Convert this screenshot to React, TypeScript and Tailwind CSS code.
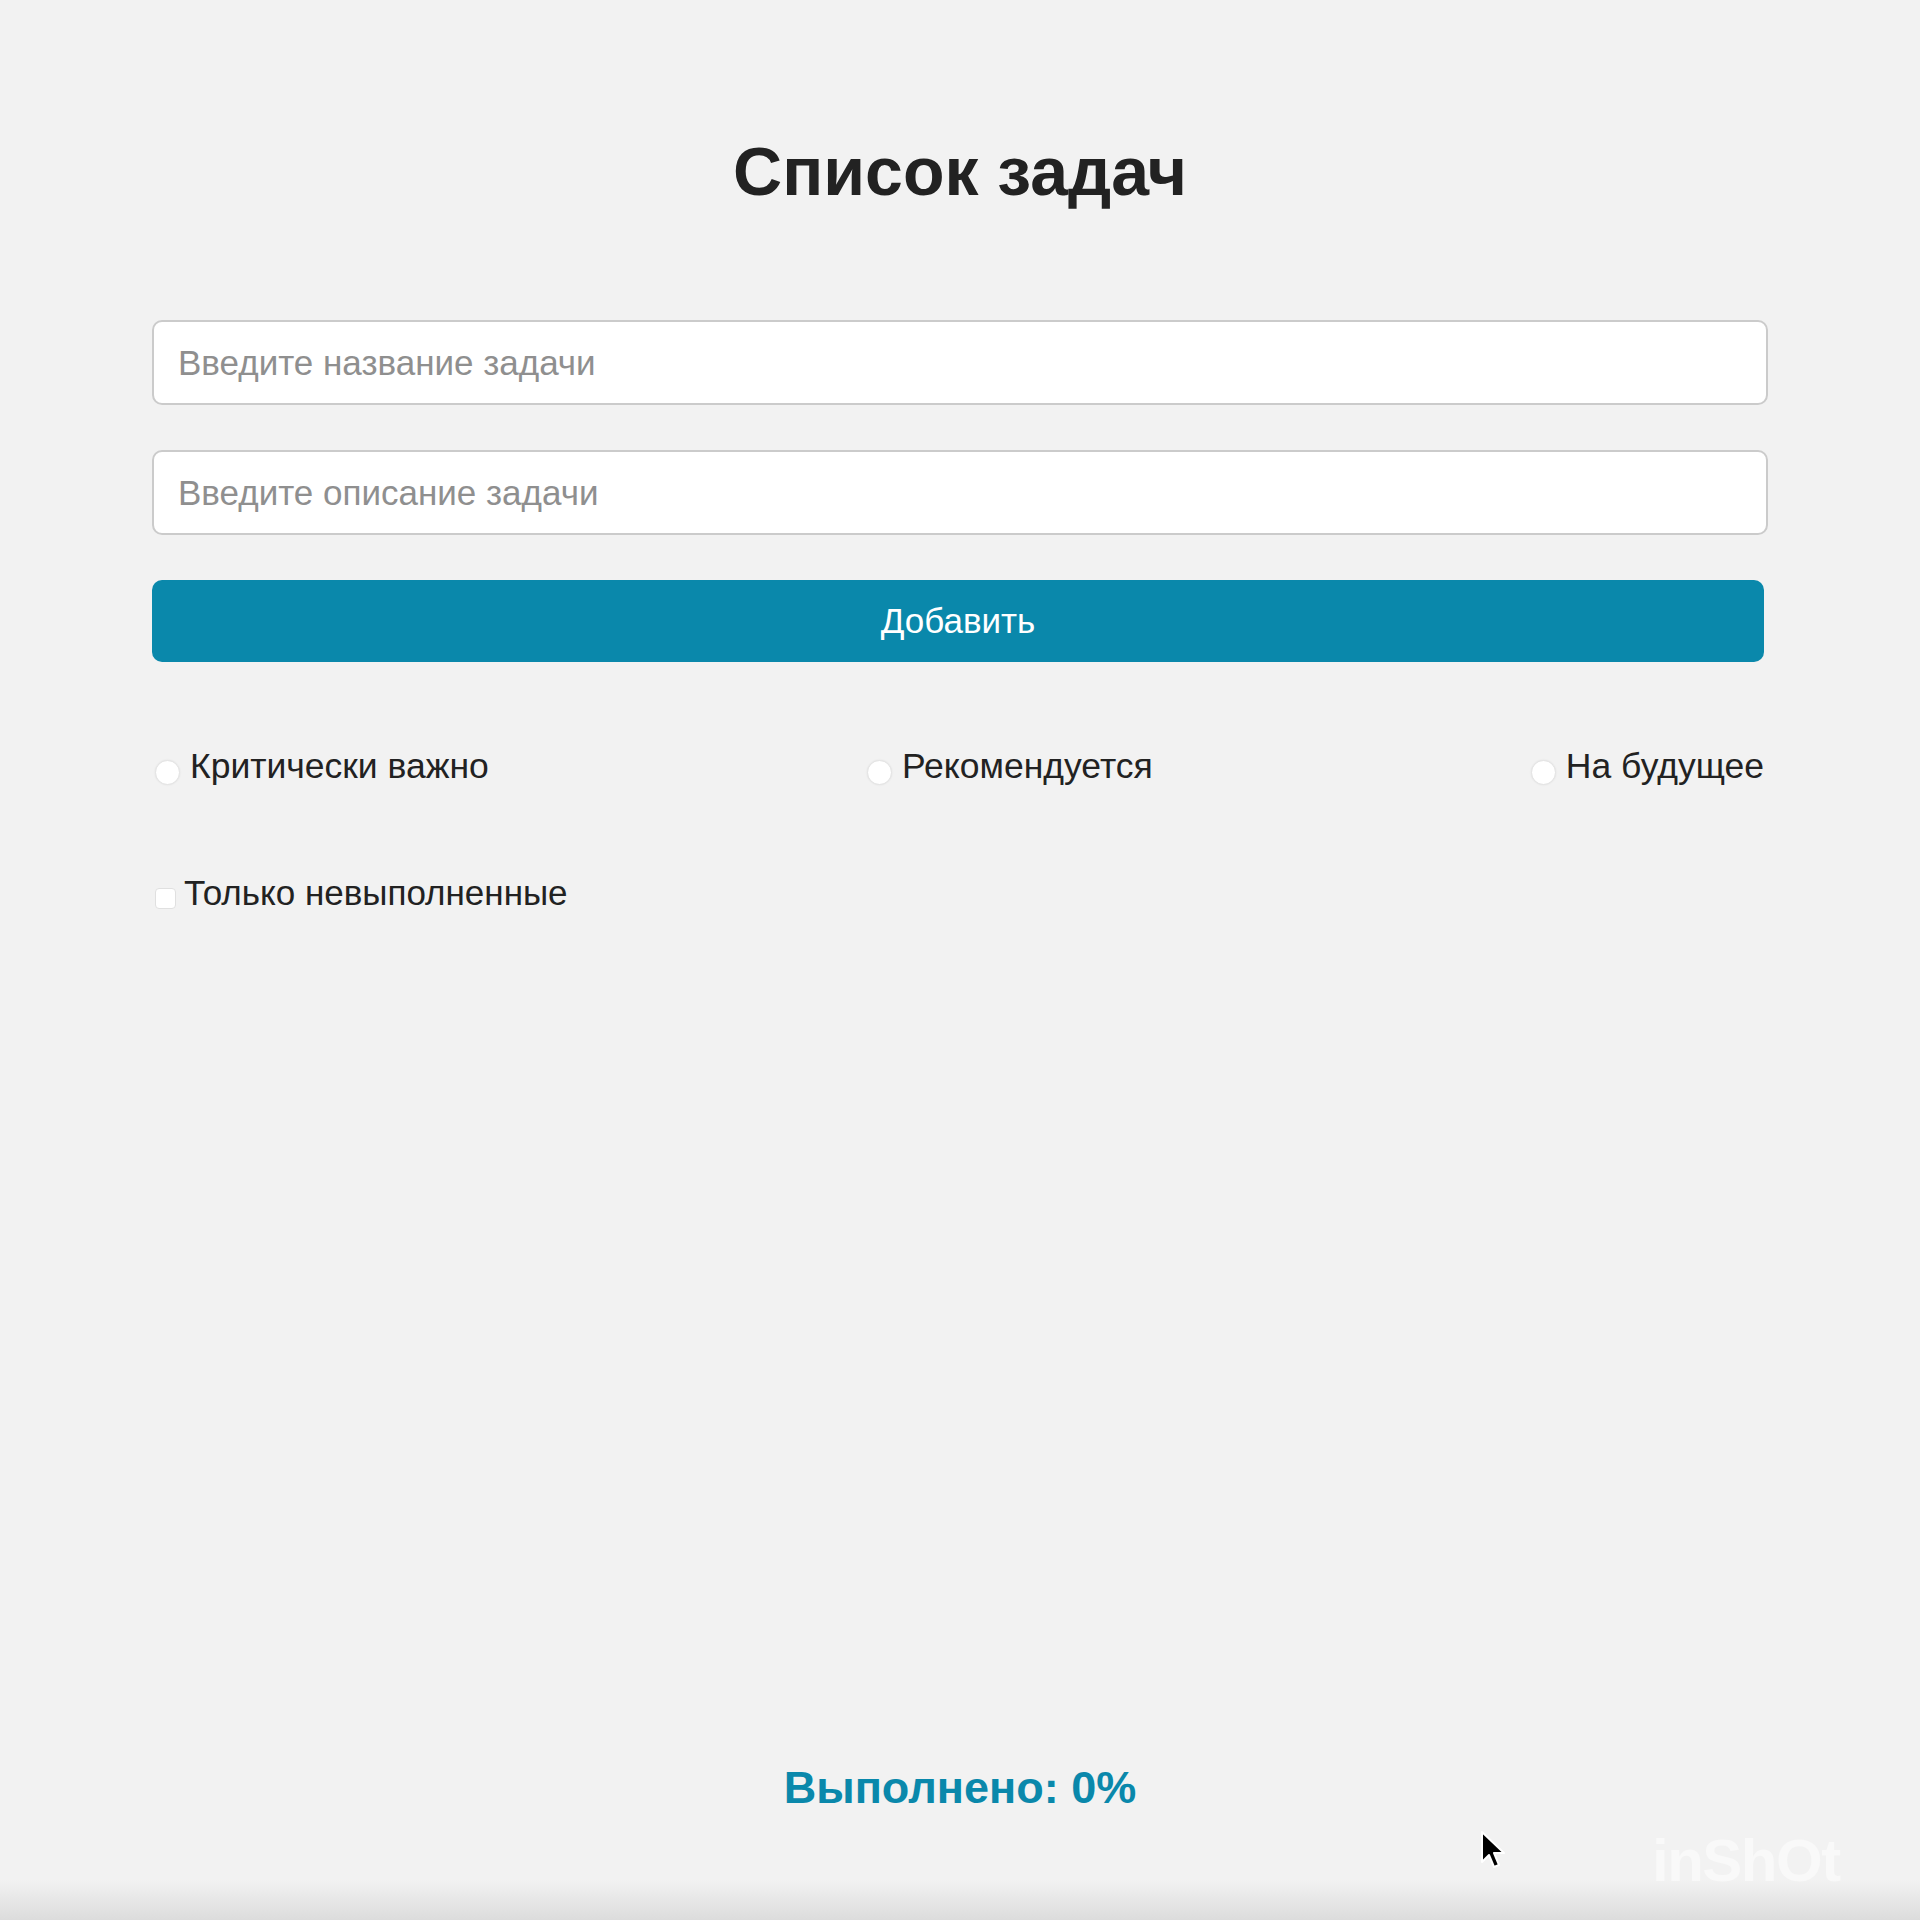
import { useState } from 'react';

const font = { fontFamily: '"Liberation Sans", Arial, sans-serif' };

function Radio({ label, checked, onChange }: { label: string; checked: boolean; onChange: () => void }) {
  return (
    <label className="flex items-center cursor-pointer">
      <span className="mt-[12px] ml-[3px] mr-[10px] w-[25px] h-[25px] rounded-full bg-white border border-[#e3e3e3] shadow-[0_0_2px_rgba(0,0,0,0.08)] flex items-center justify-center">
        {checked && <span className="w-[11px] h-[11px] rounded-full bg-[#0a88ab]" />}
      </span>
      <input type="radio" className="hidden" checked={checked} onChange={onChange} />
      <span className="text-[35.5px] leading-[40px] text-[#222]">{label}</span>
    </label>
  );
}

export default function App() {
  const [title, setTitle] = useState('');
  const [desc, setDesc] = useState('');
  const [priority, setPriority] = useState('');
  const [onlyOpen, setOnlyOpen] = useState(false);

  return (
    <div className="relative min-h-[1920px] flex flex-col bg-[#f2f2f2] px-[152px] overflow-hidden" style={font}>
      <h1 className="pt-[132px] text-center text-[68px] leading-[78px] font-bold text-[#222]">Список задач</h1>

      <div className="mt-[110px] flex flex-col gap-[45px]">
        <input
          value={title}
          onChange={e => setTitle(e.target.value)}
          placeholder="Введите название задачи"
          className="h-[85px] w-full bg-white border-2 border-[#cbcbcb] rounded-[10px] px-[24px] text-[35px] text-[#222] placeholder:text-[#8f8f8f] outline-none"
        />
        <input
          value={desc}
          onChange={e => setDesc(e.target.value)}
          placeholder="Введите описание задачи"
          className="h-[85px] w-full bg-white border-2 border-[#cbcbcb] rounded-[10px] px-[24px] text-[35px] text-[#222] placeholder:text-[#8f8f8f] outline-none"
        />
        <button className="h-[82px] mr-[4px] rounded-[10px] bg-[#0a88ab] text-white text-[35px]">Добавить</button>
      </div>

      <div className="mt-[84px] mr-[4px] flex justify-between">
        <Radio label="Критически важно" checked={priority === 'high'} onChange={() => setPriority('high')} />
        <Radio label="Рекомендуется" checked={priority === 'mid'} onChange={() => setPriority('mid')} />
        <Radio label="На будущее" checked={priority === 'low'} onChange={() => setPriority('low')} />
      </div>

      <label className="mt-[87px] flex items-center cursor-pointer">
        <span
          onClick={() => setOnlyOpen(!onlyOpen)}
          className="mt-[10px] ml-[3px] mr-[8px] w-[21px] h-[21px] rounded-[4px] bg-white border border-[#e0e0e0]"
        />
        <span className="text-[35px] leading-[40px] text-[#222]">Только невыполненные</span>
      </label>

      <div className="flex-1" />

      <p className="pb-[106px] text-center text-[45px] leading-[52px] font-bold text-[#0a88ab]">Выполнено: 0%</p>

      <div className="absolute left-0 right-0 bottom-0 h-[40px] bg-gradient-to-b from-[#f2f2f2] to-[#dcdcdc]" />

      <svg className="absolute left-[1480px] top-[1830px]" width="28" height="42" viewBox="0 0 28 42">
        <path d="M2 2 L2 32 L9 25 L14 37 L19 35 L14 23 L24 23 Z" fill="#000" stroke="#fff" strokeWidth="2" strokeLinejoin="round" />
      </svg>

      <span className="absolute left-[1652px] top-[1816px] text-[60px] font-bold text-white/50 tracking-tight">inShOt</span>
    </div>
  );
}
